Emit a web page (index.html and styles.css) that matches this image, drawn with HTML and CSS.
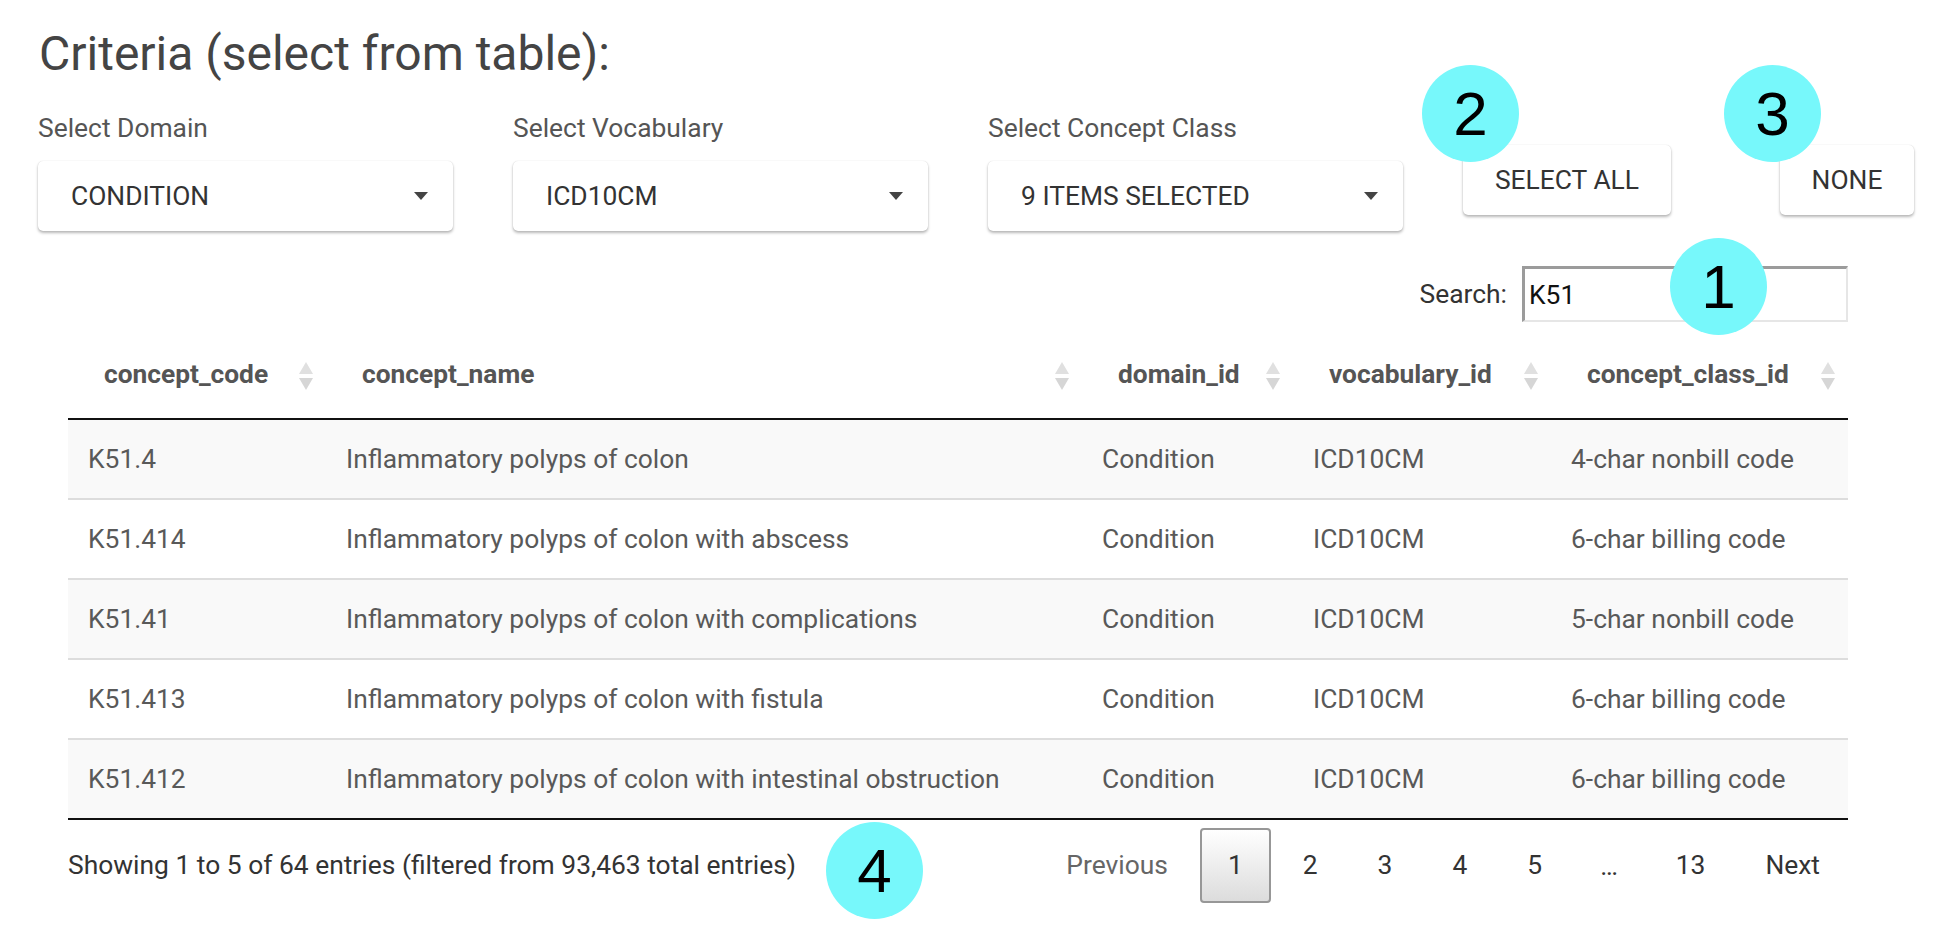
FILE: index.html
```html
<!DOCTYPE html>
<html lang="en">
<head>
<meta charset="utf-8">
<title>Criteria</title>
<link rel="stylesheet" href="styles.css">
</head>
<body>
<div class="page">
  <h2 class="title">Criteria (select from table):</h2>

  <div class="controls">
    <div class="field">
      <div class="field-label">Select Domain</div>
      <div class="select"><span>CONDITION</span><span class="caret"></span></div>
    </div>
    <div class="field">
      <div class="field-label">Select Vocabulary</div>
      <div class="select"><span>ICD10CM</span><span class="caret"></span></div>
    </div>
    <div class="field">
      <div class="field-label">Select Concept Class</div>
      <div class="select"><span>9 ITEMS SELECTED</span><span class="caret"></span></div>
    </div>
    <button class="btn btn-all">SELECT ALL</button>
    <button class="btn btn-none">NONE</button>
  </div>

  <div class="dt">
    <div class="search-row">
      <label class="search-label" for="q">Search:</label>
      <input id="q" class="search-input" type="text" value="K51">
    </div>

    <table class="grid">
      <colgroup>
        <col class="c1"><col class="c2"><col class="c3"><col class="c4"><col class="c5">
      </colgroup>
      <thead>
        <tr>
          <th>concept_code<span class="sort"></span></th>
          <th>concept_name<span class="sort"></span></th>
          <th>domain_id<span class="sort"></span></th>
          <th>vocabulary_id<span class="sort"></span></th>
          <th>concept_class_id<span class="sort"></span></th>
        </tr>
      </thead>
      <tbody>
        <tr class="odd"><td>K51.4</td><td>Inflammatory polyps of colon</td><td>Condition</td><td>ICD10CM</td><td>4-char nonbill code</td></tr>
        <tr class="even"><td>K51.414</td><td>Inflammatory polyps of colon with abscess</td><td>Condition</td><td>ICD10CM</td><td>6-char billing code</td></tr>
        <tr class="odd"><td>K51.41</td><td>Inflammatory polyps of colon with complications</td><td>Condition</td><td>ICD10CM</td><td>5-char nonbill code</td></tr>
        <tr class="even"><td>K51.413</td><td>Inflammatory polyps of colon with fistula</td><td>Condition</td><td>ICD10CM</td><td>6-char billing code</td></tr>
        <tr class="odd"><td>K51.412</td><td>Inflammatory polyps of colon with intestinal obstruction</td><td>Condition</td><td>ICD10CM</td><td>6-char billing code</td></tr>
      </tbody>
    </table>

    <div class="footer">
      <div class="info">Showing 1 to 5 of 64 entries (filtered from 93,463 total entries)</div>
      <div class="paginate">
        <span class="pg disabled">Previous</span>
        <span class="pg current">1</span>
        <span class="pg">2</span>
        <span class="pg">3</span>
        <span class="pg">4</span>
        <span class="pg">5</span>
        <span class="ellipsis">…</span>
        <span class="pg">13</span>
        <span class="pg">Next</span>
      </div>
    </div>
  </div>

  <span class="badge badge-1">1</span>
  <span class="badge badge-2">2</span>
  <span class="badge badge-3">3</span>
  <span class="badge badge-4">4</span>
</div>
</body>
</html>
```

FILE: styles.css
```css
* { box-sizing: border-box; }

html, body {
  margin: 0;
  padding: 0;
  background: #ffffff;
}

body {
  font-family: Roboto, "Liberation Sans", Arial, sans-serif;
  color: #333;
}

.page {
  position: relative;
  width: 1950px;
  height: 944px;
  padding-left: 38px;
  overflow: hidden;
}

.title {
  margin: 26px 0 0 1px;
  font-size: 48px;
  line-height: 55px;
  font-weight: 400;
  color: #444;
}

/* controls row */
.controls {
  display: flex;
  align-items: flex-start;
  gap: 60px;
  margin-top: 32px;
}

.field {
  width: 415px;
  display: flex;
  flex-direction: column;
}

.field-label {
  font-size: 26.4px;
  line-height: 30px;
  color: #555;
}

.select {
  margin-top: 18px;
  height: 70px;
  background: #fff;
  border-radius: 5px;
  box-shadow: 0 2px 3px rgba(0, 0, 0, 0.28), 0 0 1px rgba(0, 0, 0, 0.18);
  display: flex;
  align-items: center;
  justify-content: space-between;
  padding: 0 25px 0 33px;
  font-size: 26.4px;
  color: #333;
}

.caret {
  width: 0;
  height: 0;
  border-left: 7.5px solid transparent;
  border-right: 7.5px solid transparent;
  border-top: 8px solid #444;
}

.btn {
  margin-top: 32px;
  height: 70px;
  padding: 0;
  border: 0;
  background: #fff;
  border-radius: 5px;
  box-shadow: 0 2px 3px rgba(0, 0, 0, 0.28), 0 0 1px rgba(0, 0, 0, 0.18);
  font-family: Roboto, "Liberation Sans", Arial, sans-serif;
  font-size: 26.4px;
  color: #333;
}

.btn-all { width: 208px; }
.btn-none { width: 134px; margin-left: 49px; }

/* datatable */
.dt {
  margin-left: 30px;
  width: 1780px;
}

.search-row {
  display: flex;
  justify-content: flex-end;
  align-items: center;
  margin-top: 35px;
  gap: 15px;
}

.search-label {
  font-size: 26.4px;
  color: #333;
}

.search-input {
  width: 326px;
  height: 56px;
  margin: 0;
  padding: 0 0 0 4px;
  border-style: solid;
  border-width: 3px 2px 2px 3px;
  border-color: #9b9b9b #e6e6e6 #e6e6e6 #9b9b9b;
  font-family: Roboto, "Liberation Sans", Arial, sans-serif;
  font-size: 26.4px;
  color: #111;
  background: #fff;
  outline: none;
}

.grid {
  margin-top: 16px;
  width: 1780px;
  border-collapse: collapse;
  table-layout: fixed;
  border-bottom: 2px solid #111;
}

.c1 { width: 258px; }
.c2 { width: 756px; }
.c3 { width: 211px; }
.c4 { width: 258px; }
.c5 { width: 297px; }

.grid th {
  position: relative;
  text-align: left;
  font-weight: 700;
  font-size: 26.3px;
  line-height: 36px;
  color: #555;
  padding: 18px 36px 26px 36px;
  border-bottom: 2px solid #111;
  white-space: nowrap;
}

.sort {
  position: absolute;
  right: 13px;
  top: 24px;
  width: 14px;
  height: 28px;
}

.sort::before,
.sort::after {
  content: "";
  position: absolute;
  left: 0;
  width: 0;
  height: 0;
  border-left: 7px solid transparent;
  border-right: 7px solid transparent;
}

.sort::before {
  top: 0;
  border-bottom: 12px solid #e0e0e0;
}

.sort::after {
  bottom: 0;
  border-top: 12px solid #d6d6d6;
}

.grid td {
  height: 80px;
  padding: 0 20px;
  font-size: 26.4px;
  color: #595959;
  vertical-align: middle;
  white-space: nowrap;
  border-top: 2px solid #dddddd;
}

.grid tbody tr:first-child td { border-top: 0; }

.grid tr.odd td { background: #f9f9f9; }
.grid tr.even td { background: #ffffff; }

/* footer */
.footer {
  display: flex;
  justify-content: space-between;
  align-items: center;
  margin-top: 8px;
}

.info {
  font-size: 26.4px;
  color: #333;
  margin-top: -2px;
}

.paginate {
  display: flex;
  align-items: center;
}

.pg {
  display: inline-block;
  height: 75px;
  line-height: 71px;
  padding: 0 26px;
  margin-left: 4px;
  border: 2px solid transparent;
  border-radius: 4px;
  font-size: 26.4px;
  color: #333;
}

.pg.disabled { color: #666; }

.pg.current {
  border-color: #979797;
  background: linear-gradient(to bottom, #ffffff 0%, #dcdcdc 100%);
}

.ellipsis {
  display: inline-block;
  padding: 0 26px;
  margin-left: 4px;
  font-size: 26.4px;
  color: #333;
}

/* annotation badges */
.badge {
  position: absolute;
  width: 97px;
  height: 97px;
  border-radius: 50%;
  background: #77f8fb;
  color: #000;
  font-family: "Liberation Sans", Arial, sans-serif;
  font-size: 62px;
  line-height: 97px;
  text-align: center;
}

.badge-1 { left: 1670px; top: 238px; }
.badge-2 { left: 1422px; top: 65px; }
.badge-3 { left: 1724px; top: 65px; }
.badge-4 { left: 826px; top: 822px; }
```
